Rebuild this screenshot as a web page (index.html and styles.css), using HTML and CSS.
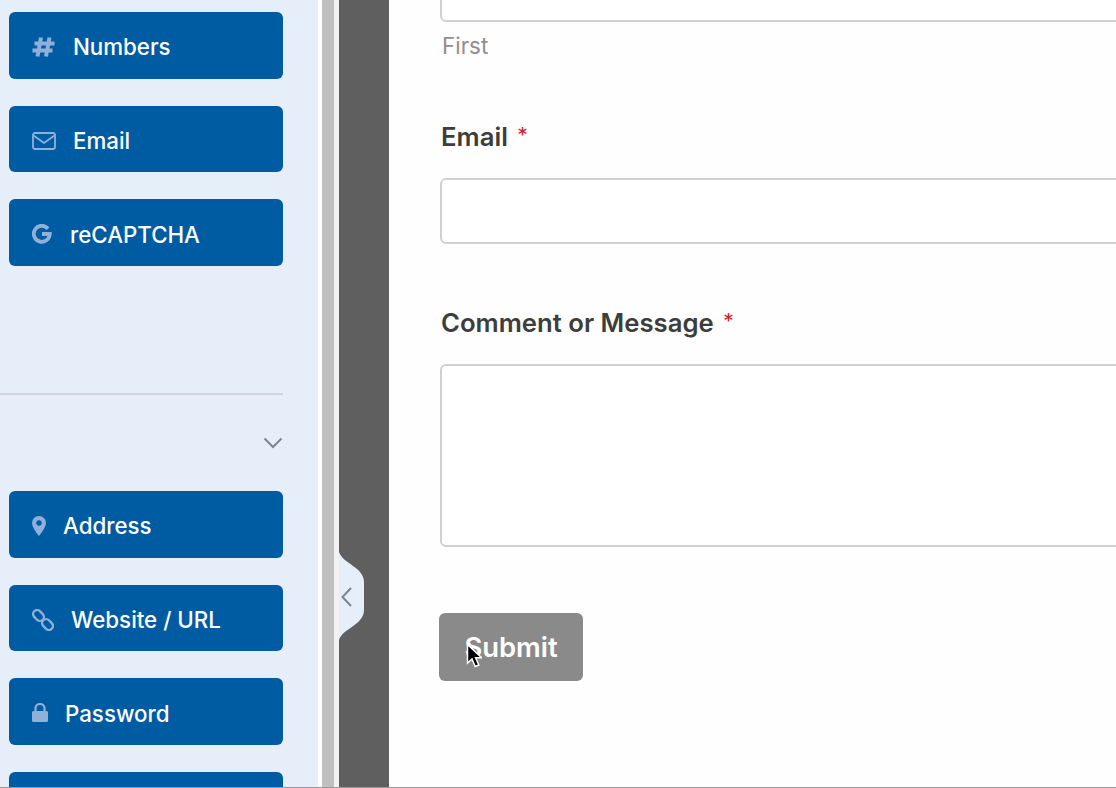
FILE: index.html
```html
<!DOCTYPE html>
<html lang="en">

<head>
    <meta charset="UTF-8">
    <title>Form Builder</title>
    <link rel="stylesheet" href="styles.css">
</head>

<body>
    <div class="builder">
        <aside class="sidebar">
            <div class="field-group">
                <button class="field-btn">
                    <svg class="icon icon-hash" viewBox="0 0 23 20"><path d="M9 .5 5.500 19.500M17.500 .5 14 19.500M2.500 6.500H22.500M.5 13.500H20.500" fill="none" stroke="currentColor" stroke-width="4"/></svg>
                    <span>Numbers</span>
                </button>
                <button class="field-btn">
                    <svg class="icon icon-mail" viewBox="0 0 24 18"><rect x="1" y="1" width="22" height="16" rx="2" fill="none" stroke="currentColor" stroke-width="1.800"/><path d="M1.500 3.500 12 11l10.500-7.500" fill="none" stroke="currentColor" stroke-width="1.800"/></svg>
                    <span>Email</span>
                </button>
                <button class="field-btn btn-captcha">
                    <svg class="icon icon-google" viewBox="0 0 20 20"><path d="M16 4.700A8 8 0 1 0 17.800 10H10" fill="none" stroke="currentColor" stroke-width="3.800"/></svg>
                    <span>reCAPTCHA</span>
                </button>
            </div>

            <div class="group-head">
                <svg class="chevron" viewBox="0 0 20 12"><path d="M1.500 1.500 10 10l8.500-8.500" fill="none" stroke="currentColor" stroke-width="2"/></svg>
            </div>

            <div class="field-group">
                <button class="field-btn btn-address">
                    <svg class="icon icon-pin" viewBox="0 0 14 20"><path fill-rule="evenodd" d="M7 0a7 7 0 0 1 7 7c0 3.500-4 9.500-7 13C4 16.500 0 10.500 0 7a7 7 0 0 1 7-7Zm0 4.300a2.700 2.700 0 1 0 0 5.400 2.700 2.700 0 0 0 0-5.400Z" fill="currentColor"/></svg>
                    <span>Address</span>
                </button>
                <button class="field-btn btn-url">
                    <svg class="icon icon-link" viewBox="0 0 22 22"><g fill="none" stroke="currentColor" stroke-width="2.400"><rect x="0.500" y="2.500" width="12" height="8" rx="4" transform="rotate(45 6.500 6.500)"/><rect x="9.500" y="11.500" width="12" height="8" rx="4" transform="rotate(45 15.500 15.500)"/></g></svg>
                    <span>Website / URL</span>
                </button>
                <button class="field-btn btn-password">
                    <svg class="icon icon-lock" viewBox="0 0 16 20"><path d="M3.500 9V5.500a4.500 4.500 0 0 1 9 0V9" fill="none" stroke="currentColor" stroke-width="2.200"/><rect y="8" width="16" height="11" rx="1.500" fill="currentColor"/></svg>
                    <span>Password</span>
                </button>
                <button class="field-btn"></button>
            </div>
        </aside>

        <div class="rail"></div>

        <div class="preview-gutter">
            <svg class="collapse-tab" viewBox="0 0 25 88"><path d="M0 0C4 12 25 15 25 30V58C25 73 4 76 0 88Z" fill="#e6eefa"/><path d="M12 36 3.500 45l8.500 9" fill="none" stroke="#78869a" stroke-width="2"/></svg>
        </div>

        <main class="form-preview">
            <div class="input input-name"></div>
            <p class="sublabel">First</p>

            <label class="field-label label-email">Email <em>*</em></label>
            <div class="input input-email"></div>

            <label class="field-label label-message">Comment or Message <em>*</em></label>
            <div class="input input-message"></div>

            <button class="submit">
                Submit
                <svg class="cursor" viewBox="0 0 16 26"><path d="M1.500 1.500V20l4.500-4 3.200 7.500 3.600-1.500-3.200-7.300h6Z" fill="#000" stroke="#fff" stroke-width="1.500"/></svg>
            </button>
        </main>
    </div>
</body>

</html>
```

FILE: styles.css
```css
* {
    margin: 0;
    padding: 0;
    box-sizing: border-box;
}

html,
body {
    height: 788px;
    overflow: hidden;
}

body {
    border-bottom: 1px solid #9a9a9a;
    font-family: 'Inter', 'Liberation Sans', sans-serif;
    background: #fff;
}

.builder {
    display: flex;
    height: 787px;
    overflow: hidden;
}

/* Left panel */
.sidebar {
    width: 318px;
    flex: none;
    padding: 12px 35px 0 9px;
    background: #e6eefa;
    overflow: hidden;
}

.field-group {
    display: flex;
    flex-direction: column;
    gap: 27px;
}

.field-btn {
    display: flex;
    flex: none;
    align-items: center;
    width: 274px;
    height: 66.700px;
    padding: 3px 0 0 23px;
    border: none;
    border-radius: 6px;
    background: #005ca2;
    color: #fff;
    font-family: inherit;
    font-size: 22.300px;
    font-weight: 500;
    text-align: left;
}

.icon {
    flex: none;
    color: #8fb0d8;
}

.icon-hash {
    width: 23px;
    height: 20px;
    margin-right: 18px;
}

.icon-mail {
    width: 24px;
    height: 18px;
    margin-right: 17px;
}

.icon-google {
    width: 20px;
    height: 20px;
    margin-right: 18px;
}

.icon-pin {
    width: 14px;
    height: 20px;
    margin-right: 17px;
}

.icon-link {
    width: 22px;
    height: 22px;
    margin-right: 17px;
}

.icon-lock {
    width: 16px;
    height: 20px;
    margin-right: 17px;
}

.group-head {
    display: flex;
    justify-content: flex-end;
    align-items: center;
    height: 98px;
    margin: 127px 0 0 -9px;
    border-top: 2px solid #cdd3df;
}

.chevron {
    width: 20px;
    height: 12px;
    color: #7d8792;
}

/* Divider between the panel and the preview */
.rail {
    width: 21px;
    flex: none;
    border-left: 4px solid #fff;
    border-right: 5px solid #f2f2f2;
    background: #c0c0c0;
}

.preview-gutter {
    position: relative;
    width: 50px;
    flex: none;
    background: #5f5f5f;
}

.collapse-tab {
    position: absolute;
    top: 552px;
    left: 0;
    width: 25px;
    height: 88px;
}

/* Form preview */
.form-preview {
    flex: 1;
    padding-left: 52px;
    background: #fefefe;
    color: #3d3d3d;
    overflow: hidden;
}

.input {
    width: 800px;
    margin-left: -1px;
    border: 2px solid #d0d0d0;
    border-radius: 6px;
    background: #fff;
}

.input-name {
    height: 42px;
    margin-top: -20px;
}

.sublabel {
    margin: 10px 0 0 1px;
    font-size: 22.400px;
    line-height: 27px;
    color: #8f8f8f;
}

.field-label {
    display: block;
    font-size: 25.700px;
    font-weight: 600;
    line-height: 30px;
}

.field-label em {
    position: relative;
    top: -3px;
    margin-left: 3px;
    font-size: 21px;
    font-style: normal;
    font-weight: 400;
    color: #c8242b;
}

.label-email {
    margin-top: 63px;
}

.input-email {
    height: 66px;
    margin-top: 24px;
}

.label-message {
    margin-top: 64px;
}

.input-message {
    height: 183px;
    margin-top: 24px;
}

.submit {
    position: relative;
    display: block;
    width: 144px;
    height: 68px;
    margin: 66px 0 0 -2px;
    border: none;
    border-radius: 6px;
    background: #8a8a8a;
    color: #fff;
    font-family: inherit;
    font-size: 27.400px;
    font-weight: 600;
}

.cursor {
    position: absolute;
    top: 30px;
    left: 27px;
    width: 16px;
    height: 26px;
}
```
